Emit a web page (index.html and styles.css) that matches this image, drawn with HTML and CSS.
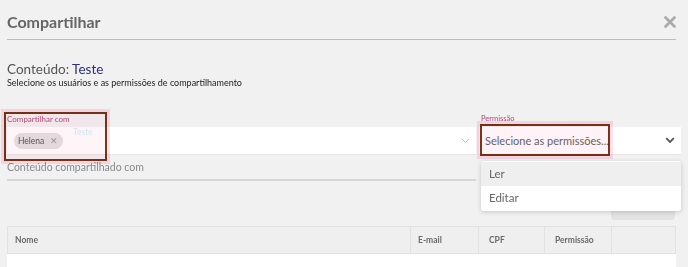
FILE: index.html
```html
<!DOCTYPE html>
<html lang="pt-BR">
<head>
    <meta charset="UTF-8">
    <title>Compartilhar</title>
    <link rel="stylesheet" href="styles.css">
</head>
<body>
    <div class="modal">
        <header class="modal-head">
            <h1 class="modal-title">Compartilhar</h1>
            <svg class="modal-close" width="12" height="12" viewBox="0 0 12 12"><path d="M1.5 1.5L10.5 10.5M10.5 1.5L1.5 10.5" stroke="#a9a9a9" stroke-width="2.6" stroke-linecap="round"/></svg>
        </header>

        <p class="content-name">Conteúdo: <span class="content-link">Teste</span></p>
        <p class="hint">Selecione os usuários e as permissões de compartilhamento</p>

        <div class="fields">
            <div class="field field-users">
                <label class="field-label">Compartilhar com</label>
                <div class="select">
                    <span class="chip">Helena <span class="chip-x">✕</span></span>
                    <span class="ghost">Teste</span>
                    <svg class="chevron chevron-light" width="9" height="6" viewBox="0 0 9 6"><path d="M1 1l3.5 3.5L8 1" fill="none" stroke="#c4c4c4" stroke-width="1"/></svg>
                </div>
                <div class="mark mark-users"></div>
            </div>
            <div class="field field-perm">
                <label class="field-label">Permissão</label>
                <div class="select">
                    <span class="placeholder">Selecione as permissões...</span>
                    <svg class="chevron" width="10" height="7" viewBox="0 0 10 7"><path d="M1.2 1.2L5 5l3.8-3.8" fill="none" stroke="#555" stroke-width="1.8"/></svg>
                </div>
                <div class="mark mark-perm"></div>
                <ul class="menu">
                    <li class="menu-item active">Ler</li>
                    <li class="menu-item">Editar</li>
                </ul>
            </div>
        </div>

        <div class="shared">Conteúdo compartilhado com</div>

        <div class="actions"><span class="btn"></span></div>

        <table class="grid">
            <thead>
                <tr>
                    <th class="col-name">Nome</th>
                    <th class="col-mail">E-mail</th>
                    <th class="col-cpf">CPF</th>
                    <th class="col-perm">Permissão</th>
                    <th class="col-act"></th>
                </tr>
            </thead>
            <tbody>
                <tr><td colspan="5"></td></tr>
            </tbody>
        </table>
    </div>
</body>
</html>
```

FILE: styles.css
```css
:root {
    --bg: #f1f1f1;
    --text: #666;
    --line: #bdbdbd;
    --border: #e2e2e2;
    --mark: #7c3414;
    --pink: rgba(255, 200, 222, 0.55);
}

body {
    margin: 0;
    background-color: var(--bg);
    font-family: Lato, 'Open Sans', sans-serif;
    color: var(--text);
    overflow: hidden;
}

.modal {
    padding: 0 12px 0 7px;
}

.modal-head {
    display: flex;
    align-items: center;
    justify-content: space-between;
    height: 40px;
    box-sizing: border-box;
    padding-top: 4px;
    border-bottom: 1px solid var(--line);
}

.modal-title {
    margin: 0;
    font-size: 16px;
    font-weight: 700;
    color: #666;
}

.content-name {
    margin: 21px 0 0;
    font-size: 13.5px;
    line-height: 16px;
    color: #555;
}

.content-link {
    color: #2e2e80;
}

.hint {
    margin: 0;
    font-size: 9px;
    line-height: 11px;
    color: #222;
}

.fields {
    display: flex;
    gap: 3px;
    margin-top: 26px;
    margin-right: -5px;
}

.field {
    position: relative;
}

.field-users {
    width: 469px;
}

.field-perm {
    width: 202px;
}

.field-label {
    display: block;
    height: 13px;
    font-size: 8px;
    line-height: 10px;
    color: #b04c78;
}

.field-perm .field-label {
    padding-left: 2px;
    font-size: 7.5px;
}

.select {
    display: flex;
    align-items: center;
    height: 28px;
    box-sizing: border-box;
    padding: 0 6px;
    background-color: #fff;
    border-bottom: 1px solid #e6e6e6;
    position: relative;
}

.chip {
    display: inline-flex;
    align-items: center;
    gap: 6px;
    height: 16px;
    margin-left: 1px;
    padding: 0 5px 0 4px;
    border-radius: 8px;
    background-color: #e3e3e3;
    font-size: 8.5px;
    color: #555;
}

.chip-x {
    font-size: 8.5px;
    color: #999;
}

.ghost {
    position: absolute;
    left: 66px;
    top: 0;
    font-size: 8.5px;
    color: #d2f1f7;
}

.chevron {
    margin-left: auto;
}

.placeholder {
    font-size: 11px;
    color: #666;
}

.mark {
    position: absolute;
    border: 2px solid var(--mark);
    box-shadow: 0 0 0 3px var(--pink);
    pointer-events: none;
}

.mark-users {
    left: -3px;
    top: -2px;
    width: 99px;
    height: 45px;
    background-color: rgba(255, 200, 222, 0.2);
    mix-blend-mode: multiply;
}

.mark-perm {
    left: 1px;
    top: 10px;
    width: 126px;
    height: 28px;
    background-color: rgba(255, 215, 230, 0.3);
    mix-blend-mode: multiply;
}

.menu {
    position: absolute;
    left: 2px;
    right: 0;
    top: 47px;
    margin: 0;
    padding: 1px 0;
    list-style: none;
    background-color: #fff;
    border-radius: 3px;
    box-shadow: 0 1px 5px rgba(0, 0, 0, 0.18);
    z-index: 3;
}

.menu-item {
    height: 24px;
    line-height: 24px;
    padding-left: 8px;
    font-size: 11.5px;
    color: #666;
}

.menu-item.active {
    background-color: #efefef;
}

.shared {
    width: 469px;
    margin-top: 6px;
    padding-bottom: 5px;
    border-bottom: 2px solid #d6d6d6;
    font-size: 10.5px;
    line-height: 13px;
    color: #8a8a8a;
}

.actions {
    display: flex;
    justify-content: flex-end;
    margin-top: 14px;
}

.btn {
    width: 64px;
    height: 25px;
    margin-right: 1px;
    border-radius: 4px;
    background-color: #e2e2e2;
}

.grid {
    width: 669px;
    margin-top: 6px;
    border-collapse: collapse;
    background-color: #fff;
}

.grid th {
    height: 26px;
    padding: 0 0 0 10px;
    text-align: left;
    font-size: 8.5px;
    font-weight: 700;
    color: #6a6a6a;
    background-color: #efefef;
    border: 1px solid var(--border);
}

.grid th.col-name,
.grid th.col-mail {
    padding-left: 7px;
}

.grid td {
    height: 14px;
}

.col-name { width: 395px; }
.col-mail { width: 60px; }
.col-cpf { width: 55px; }
.col-perm { width: 56px; }
```
